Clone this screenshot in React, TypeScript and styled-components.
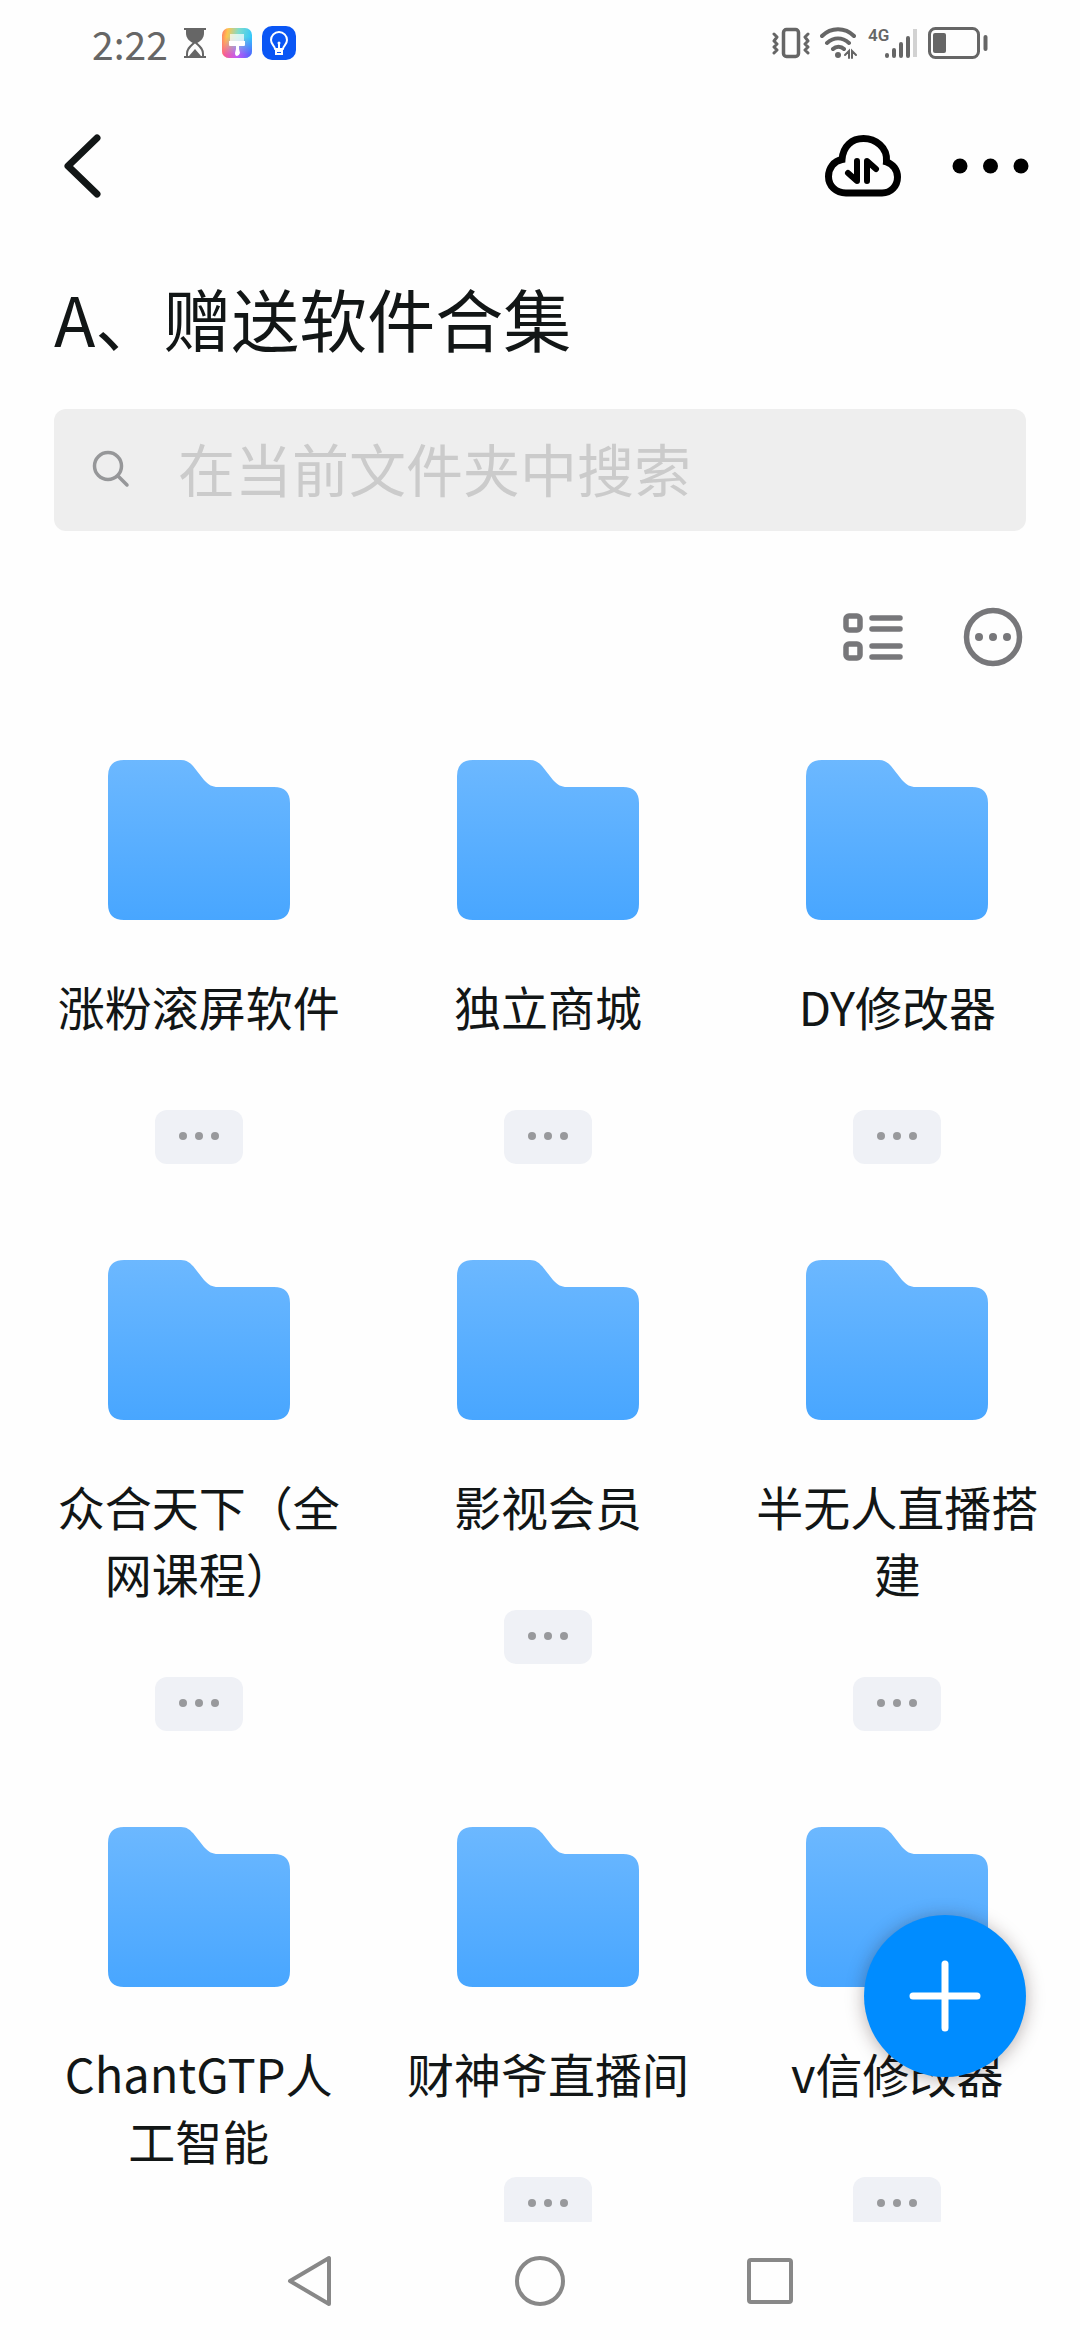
import React from "react";
import styled, { createGlobalStyle } from "styled-components";

const GlobalStyle = createGlobalStyle`
  *, *::before, *::after { box-sizing: border-box; }
  body {
    margin: 0;
    background: #fefefe;
    color: #121616;
    font-family: "Noto Sans CJK SC", "Noto Sans", sans-serif;
  }
  button { border: 0; padding: 0; background: none; font: inherit; color: inherit; cursor: pointer; }
  svg { display: block; flex: none; }
`;

const Screen = styled.div`
  display: flex;
  flex-direction: column;
  height: 100vh;
`;

const StatusBar = styled.div`
  display: flex;
  align-items: center;
  justify-content: space-between;
  flex: none;
  height: 86px;
  padding: 0 92px;
  color: #666;
`;

const StatusGroup = styled.div<{ $gap: number }>`
  display: flex;
  align-items: center;
  gap: ${(p) => p.$gap}px;
`;

const Clock = styled.time`
  font-size: 39px;
  line-height: 40px;
`;

const AppIcons = styled.div`
  display: flex;
  align-items: center;
  gap: 10px;
`;

const Header = styled.header`
  display: flex;
  align-items: center;
  justify-content: space-between;
  flex: none;
  height: 160px;
  padding: 0 50px 0 54px;
`;

const HeaderActions = styled.div`
  display: flex;
  align-items: center;
  gap: 50px;
`;

const IconButton = styled.button`
  display: flex;
  align-items: center;
  justify-content: center;
`;

const Content = styled.main`
  position: relative;
  flex: 1;
  min-height: 0;
  display: flex;
  flex-direction: column;
  overflow: hidden;
`;

const Title = styled.h1`
  flex: none;
  margin: 0;
  padding: 32px 54px 0;
  font-size: 68px;
  line-height: 80px;
  font-weight: 400;
`;

const SearchBox = styled.label`
  display: flex;
  align-items: center;
  flex: none;
  gap: 48px;
  height: 122px;
  margin: 51px 54px 0;
  padding: 0 38px;
  border-radius: 12px;
  background: #eee;
  color: #969799;
`;

const SearchInput = styled.input`
  flex: 1;
  min-width: 0;
  height: 84px;
  padding: 0 0 6px;
  border: 0;
  outline: 0;
  background: transparent;
  color: #121616;
  font-family: inherit;
  font-size: 57px;
  &::placeholder { color: #cbcbcb; opacity: 1; }
`;

const Toolbar = styled.div`
  display: flex;
  align-items: center;
  justify-content: flex-end;
  flex: none;
  gap: 60px;
  padding: 76px 57px 32px;
  color: #77777a;
`;

const Grid = styled.ul`
  display: grid;
  grid-template-columns: repeat(3, 1fr);
  grid-auto-rows: max-content;
  align-items: start;
  flex: 1;
  min-height: 0;
  margin: 0;
  padding: 0 8px 0 24px;
  list-style: none;
  overflow: hidden;
`;

const Tile = styled.li`
  display: flex;
  flex-direction: column;
  align-items: center;
  gap: 69px;
  padding: 61px 33px 35px;
`;

const FolderLink = styled.a`
  display: flex;
  flex-direction: column;
  align-items: center;
  gap: 52px;
  padding-bottom: 2px;
  color: inherit;
  text-decoration: none;
`;

const FolderName = styled.span`
  font-size: 47px;
  line-height: 67px;
  text-align: center;
  word-break: break-all;
`;

const MoreButton = styled.button`
  display: flex;
  align-items: center;
  justify-content: center;
  width: 88px;
  height: 54px;
  padding-bottom: 2px;
  border-radius: 12px;
  background: #eff1f6;
  color: #98999c;
`;

const AddButton = styled.button`
  position: absolute;
  right: 54px;
  bottom: 145px;
  display: flex;
  align-items: center;
  justify-content: center;
  width: 162px;
  height: 162px;
  border-radius: 50%;
  background: #008cff;
  color: #fff;
  box-shadow: 0 2px 18px rgba(40, 20, 20, 0.34);
`;

const NavBar = styled.nav`
  display: flex;
  justify-content: center;
  flex: none;
  height: 118px;
  color: #888;
`;

const NavButton = styled.button`
  display: flex;
  align-items: center;
  justify-content: center;
  width: 230px;
`;

const folders = [
  "涨粉滚屏软件",
  "独立商城",
  "DY修改器",
  "众合天下（全网课程）",
  "影视会员",
  "半无人直播搭建",
  "ChantGTP人工智能",
  "财神爷直播间",
  "v信修改器",
];

const Hourglass = () => (
  <svg width="22" height="30" viewBox="0 0 22 30" fill="none" stroke="currentColor" strokeWidth="2">
    <path d="M0 1h22M0 29h22" />
    <path d="M2 1h18v4c0 5-3 8-7 10h-4C5 13 2 10 2 5z" fill="currentColor" stroke="none" />
    <path d="M3 29v-3c0-6 4-8 8-12 4 4 8 6 8 12v3" />
    <path d="M5 28l6-7 6 7z" fill="currentColor" stroke="none" />
  </svg>
);

const BrushApp = () => (
  <svg width="30" height="30" viewBox="0 0 30 30">
    <defs>
      <linearGradient id="brushBase" x1="0" y1="0" x2="1" y2="0.2">
        <stop offset="0" stopColor="#ff6f6a" />
        <stop offset="0.2" stopColor="#ffc44d" />
        <stop offset="0.55" stopColor="#7fdccb" />
        <stop offset="1" stopColor="#35c8fb" />
      </linearGradient>
      <linearGradient id="brushLow" x1="0" y1="0" x2="1" y2="0">
        <stop offset="0" stopColor="#ff5b86" />
        <stop offset="0.5" stopColor="#c25af5" />
        <stop offset="1" stopColor="#4d62ff" />
      </linearGradient>
      <linearGradient id="brushFade" x1="0" y1="0" x2="0" y2="1">
        <stop offset="0.3" stopColor="#000" />
        <stop offset="0.9" stopColor="#fff" />
      </linearGradient>
      <mask id="brushMask">
        <rect width="30" height="30" fill="url(#brushFade)" />
      </mask>
    </defs>
    <rect width="30" height="30" rx="7" fill="url(#brushBase)" />
    <rect width="30" height="30" rx="7" fill="url(#brushLow)" mask="url(#brushMask)" />
    <path d="M8 6h14v7H8z" fill="#fff" fillOpacity="0.7" />
    <path d="M7 13h16v4q0 1-1 1h-5v3l1 4q-1 3-3 3t-2-3l1-4v-3H8q-1 0-1-1z" fill="#fff" />
  </svg>
);

const BulbApp = () => (
  <svg width="34" height="34" viewBox="0 0 34 34" fill="none" stroke="#fff" strokeWidth="2" strokeLinecap="round">
    <rect width="34" height="34" rx="10" fill="#0a56f5" stroke="none" />
    <path d="M13 23c0-3-4-4-4-9a8 8 0 0 1 16 0c0 5-4 6-4 9z" strokeLinejoin="round" />
    <path d="M17 18v5M14 28h6v-3h-6z" />
    <circle cx="17" cy="17" r="1.5" fill="#fff" stroke="none" />
  </svg>
);

const Vibrate = () => (
  <svg width="38" height="32" viewBox="0 0 38 32" fill="none" stroke="currentColor" strokeWidth="3.5" strokeLinejoin="round" strokeLinecap="round">
    <rect x="11.5" y="2.5" width="15" height="27" rx="3" />
    <path d="M2 7l3 3-3 4 3 3-3 3 3 3-3 3M36 7l-3 3 3 4-3 3 3 3-3 3 3 3" strokeWidth="3" />
  </svg>
);

const Wifi = () => (
  <svg width="38" height="32" viewBox="0 0 38 32" fill="none" stroke="currentColor" strokeWidth="4" strokeLinecap="round">
    <path d="M2 9c9-9 23-9 32 0M7 16c7-6 15-6 22 0M13 22c3-3 8-3 11 0" />
    <circle cx="18" cy="28" r="3" fill="currentColor" stroke="none" />
    <path d="M25 28l4-4v7M32 31v-7l4 4" strokeWidth="2" />
  </svg>
);

const CellularRow = styled.span`
  display: flex;
  align-items: flex-start;
  height: 32px;
`;

const NetworkType = styled.span`
  width: 16px;
  font-family: "Roboto", sans-serif;
  font-size: 17px;
  line-height: 16px;
  font-weight: 600;
  white-space: nowrap;
`;

const Bars = () => (
  <svg width="34" height="32" viewBox="0 0 34 32" fill="none" stroke="currentColor" strokeWidth="4" strokeLinecap="round">
    <path d="M3 28v1M10 23v6M17 17v12M24 11v18" />
    <path d="M31 2v28" stroke="#d2d2d2" strokeLinecap="butt" />
  </svg>
);

const Battery = () => (
  <svg width="60" height="32" viewBox="0 0 60 32" fill="none" stroke="currentColor" strokeWidth="3">
    <rect x="1.5" y="1.5" width="49" height="29" rx="6" />
    <rect x="5" y="6" width="13" height="20" rx="2" fill="currentColor" stroke="none" />
    <path d="M57.5 10v12" strokeWidth="4" strokeLinecap="round" />
  </svg>
);

const BackChevron = () => (
  <svg width="56" height="72" viewBox="0 0 56 72" fill="none" stroke="currentColor" strokeWidth="7" strokeLinecap="round" strokeLinejoin="round">
    <path d="M43 8L14 36l29 28" />
  </svg>
);

const CloudTransfer = () => (
  <svg width="78" height="64" viewBox="0 0 78 64" fill="none" stroke="#000" strokeWidth="7" strokeLinecap="round">
    <path d="M18 25.5C19 12 28 4.500 39.5 4.500S64 13 62.5 28C69 30 73.5 36 73.5 43 73.5 52 67 59 58 59H22C12 59 4.500 52 4.500 42.5 4.500 34 10 27 18 25.5z" />
    <path d="M33 27v20l-9-8M43 47V27l9 8" strokeWidth="6" strokeLinejoin="round" />
  </svg>
);

const HeaderDots = () => (
  <svg width="78" height="64" viewBox="0 0 78 64" fill="#000">
    <circle cx="8" cy="32" r="7.5" />
    <circle cx="38.5" cy="32" r="7.5" />
    <circle cx="69" cy="32" r="7.5" />
  </svg>
);

const SearchIcon = () => (
  <svg width="38" height="40" viewBox="0 0 38 40" fill="none" stroke="currentColor" strokeWidth="3.5" strokeLinecap="round">
    <circle cx="16" cy="16" r="13.5" />
    <path d="M26 26l9 9" />
  </svg>
);

const ListIcon = () => (
  <svg width="60" height="48" viewBox="0 0 60 48" fill="none" stroke="currentColor" strokeWidth="5.5" strokeLinecap="round">
    <rect x="3" y="3" width="14" height="14" rx="3" />
    <rect x="3" y="31" width="14" height="14" rx="3" />
    <path d="M29 5h28M29 16h28M29 33h28M29 44h28" />
  </svg>
);

const CircleDots = () => (
  <svg width="60" height="60" viewBox="0 0 60 60" fill="currentColor">
    <circle cx="30" cy="30" r="26.5" fill="none" stroke="currentColor" strokeWidth="5.5" />
    <circle cx="16" cy="30" r="4" />
    <circle cx="30" cy="30" r="4" />
    <circle cx="44" cy="30" r="4" />
  </svg>
);

const FolderIcon = () => (
  <svg width="182" height="160" viewBox="0 0 182 160">
    <defs>
      <linearGradient id="folderFill" x1="0" y1="0" x2="0" y2="1">
        <stop offset="0" stopColor="#6cb8ff" />
        <stop offset="1" stopColor="#48a6ff" />
      </linearGradient>
    </defs>
    <path
      d="M16 0H73C79 0 82 3 85 6L96 20C101 25 104 27 110 27H166Q182 27 182 43V144Q182 160 166 160H16Q0 160 0 144V16Q0 0 16 0z"
      fill="url(#folderFill)"
    />
  </svg>
);

const MoreDots = () => (
  <svg width="40" height="8" viewBox="0 0 40 8" fill="currentColor">
    <circle cx="4" cy="4" r="4" />
    <circle cx="20" cy="4" r="4" />
    <circle cx="36" cy="4" r="4" />
  </svg>
);

const PlusIcon = () => (
  <svg width="72" height="72" viewBox="0 0 72 72" fill="none" stroke="currentColor" strokeWidth="7" strokeLinecap="round">
    <path d="M36 4v64M4 36h64" />
  </svg>
);

export default function App() {
  return (
    <Screen>
      <GlobalStyle />
      <StatusBar>
        <StatusGroup $gap={16}>
          <Clock>2:22</Clock>
          <Hourglass />
          <AppIcons>
            <BrushApp />
            <BulbApp />
          </AppIcons>
        </StatusGroup>
        <StatusGroup $gap={10}>
          <Vibrate />
          <Wifi />
          <CellularRow>
            <NetworkType>4G</NetworkType>
            <Bars />
          </CellularRow>
          <Battery />
        </StatusGroup>
      </StatusBar>

      <Header>
        <IconButton type="button" aria-label="返回">
          <BackChevron />
        </IconButton>
        <HeaderActions>
          <IconButton type="button" aria-label="传输列表">
            <CloudTransfer />
          </IconButton>
          <IconButton type="button" aria-label="更多">
            <HeaderDots />
          </IconButton>
        </HeaderActions>
      </Header>

      <Content>
        <Title>A、赠送软件合集</Title>
        <SearchBox>
          <SearchIcon />
          <SearchInput type="text" aria-label="搜索" placeholder="在当前文件夹中搜索" />
        </SearchBox>
        <Toolbar>
          <IconButton type="button" aria-label="列表视图">
            <ListIcon />
          </IconButton>
          <IconButton type="button" aria-label="更多操作">
            <CircleDots />
          </IconButton>
        </Toolbar>
        <Grid>
          {folders.map((name) => (
            <Tile key={name}>
              <FolderLink href="#">
                <FolderIcon />
                <FolderName>{name}</FolderName>
              </FolderLink>
              <MoreButton type="button" aria-label="文件夹操作">
                <MoreDots />
              </MoreButton>
            </Tile>
          ))}
        </Grid>
        <AddButton type="button" aria-label="新建">
          <PlusIcon />
        </AddButton>
      </Content>

      <NavBar>
        <NavButton type="button" aria-label="后退">
          <svg width="50" height="54" viewBox="0 0 50 54" fill="none" stroke="currentColor" strokeWidth="4" strokeLinejoin="round">
            <path d="M44 4v46L5 27z" />
          </svg>
        </NavButton>
        <NavButton type="button" aria-label="主页">
          <svg width="50" height="50" viewBox="0 0 50 50" fill="none" stroke="currentColor" strokeWidth="4">
            <circle cx="25" cy="25" r="23" />
          </svg>
        </NavButton>
        <NavButton type="button" aria-label="最近任务">
          <svg width="46" height="46" viewBox="0 0 46 46" fill="none" stroke="currentColor" strokeWidth="4">
            <rect x="2" y="2" width="42" height="42" rx="2" />
          </svg>
        </NavButton>
      </NavBar>
    </Screen>
  );
}
